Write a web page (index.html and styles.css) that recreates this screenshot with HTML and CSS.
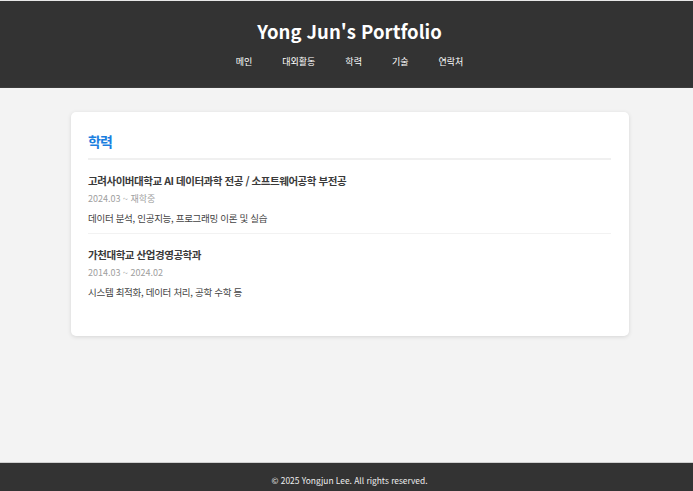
FILE: index.html
```html
<!DOCTYPE html>
<html lang="ko">
<head>
<meta charset="utf-8">
<title>Yong Jun's Portfolio</title>
<link rel="stylesheet" href="styles.css">
</head>
<body>
<header class="site-header">
  <h1 class="site-title">Yong Jun's Portfolio</h1>
  <nav class="site-nav">
    <a href="#">메인</a>
    <a href="#">대외활동</a>
    <a href="#">학력</a>
    <a href="#">기술</a>
    <a href="#">연락처</a>
  </nav>
</header>
<main class="content">
  <section class="card">
    <h2 class="card-title">학력</h2>
    <div class="edu-item">
      <h3 class="edu-name">고려사이버대학교 AI 데이터과학 전공 / 소프트웨어공학 부전공</h3>
      <p class="edu-date">2024.03 ~ 재학중</p>
      <p class="edu-desc">데이터 분석, 인공지능, 프로그래밍 이론 및 실습</p>
    </div>
    <div class="edu-item">
      <h3 class="edu-name">가천대학교 산업경영공학과</h3>
      <p class="edu-date">2014.03 ~ 2024.02</p>
      <p class="edu-desc">시스템 최적화, 데이터 처리, 공학 수학 등</p>
    </div>
  </section>
</main>
<footer class="site-footer">© 2025 Yongjun Lee. All rights reserved.</footer>
</body>
</html>
```

FILE: styles.css
```css
* { box-sizing: border-box; }
html, body { height: 100%; }
body {
  margin: 0;
  background: #f3f3f3;
  font-family: "Noto Sans CJK KR", "Noto Sans", sans-serif;
  color: #333;
  display: flex;
  flex-direction: column;
}
.site-header {
  background: #333333;
  border-top: 1px solid #e8e8e8;
  border-bottom: 1px solid #3c3c3c;
  color: #fff;
  text-align: center;
  padding: 15px 0 18px 6px;
}
.site-title {
  margin: 0;
  font-size: 18.5px;
  font-weight: 700;
  line-height: 30px;
}
.site-nav {
  display: flex;
  justify-content: center;
  gap: 30px;
  margin-top: 9px;
  font-size: 9px;
  line-height: 14px;
}
.site-nav a {
  color: #fff;
  text-decoration: none;
}
.content {
  flex: 1;
  padding: 24px 64px 0 71px;
}
.card {
  background: #fff;
  border-radius: 5px;
  box-shadow: 0 1px 4px rgba(0,0,0,0.12);
  padding: 17px 18px 29px 17px;
}
.card-title {
  margin: 0;
  color: #1b7fdf;
  font-size: 14px;
  letter-spacing: -0.8px;
  font-weight: 700;
  line-height: 22px;
  padding: 1px 0 6px;
  border-bottom: 2px solid #f0f0f0;
}
.edu-item {
  padding: 12px 0 8px;
  border-bottom: 1px solid #f2f2f2;
}
.edu-item:last-child { border-bottom: none; }
.edu-name {
  margin: 0;
  font-size: 10.5px;
  letter-spacing: -0.45px;
  font-weight: 700;
  line-height: 18px;
  color: #3a3a3a;
}
.edu-date {
  margin: 2px 0 0;
  font-size: 9px;
  line-height: 13px;
  color: #a0a0a0;
}
.edu-desc {
  margin: 6px 0 0;
  font-size: 9.5px;
  letter-spacing: -0.3px;
  line-height: 14px;
  color: #444;
}
.site-footer {
  background: #333333;
  color: #eeeeee;
  text-align: center;
  font-size: 8.4px;
  line-height: 14px;
  padding: 10px 0 4px 6px;
  border-top: 1px solid #cfcfcf;
}
```
